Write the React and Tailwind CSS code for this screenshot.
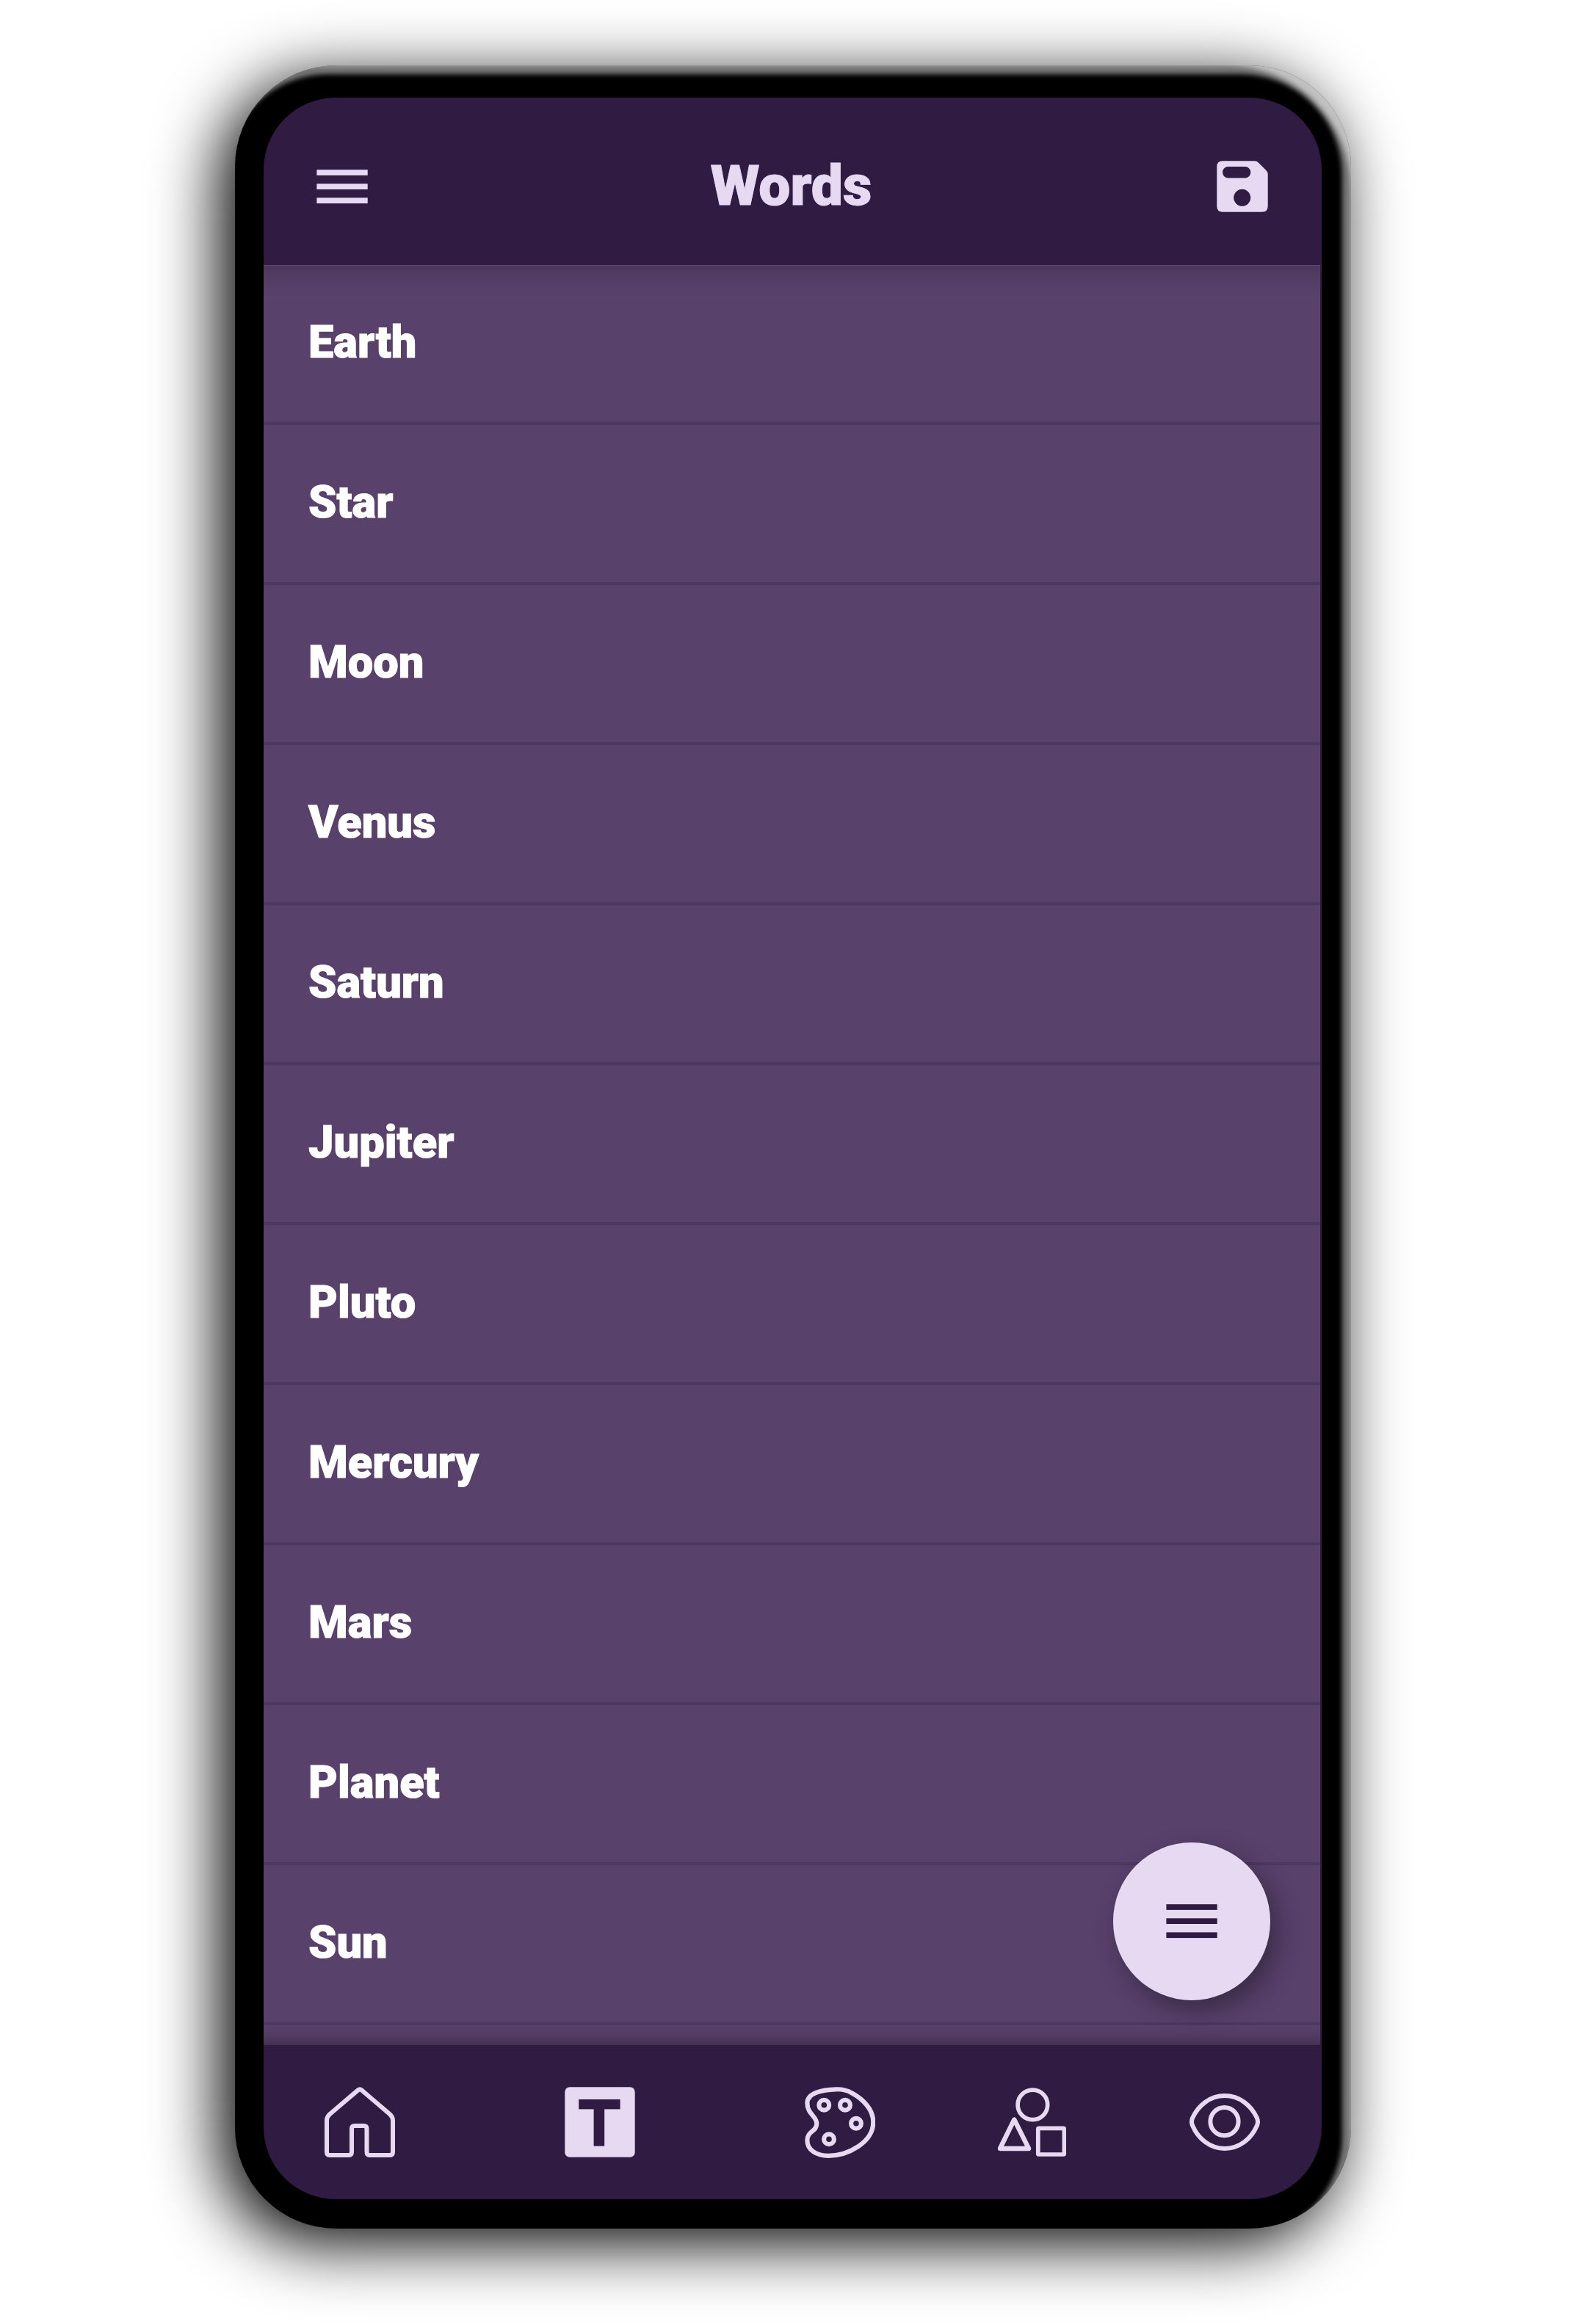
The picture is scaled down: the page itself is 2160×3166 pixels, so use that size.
const WORDS = ["Earth", "Star", "Moon", "Venus", "Saturn", "Jupiter", "Pluto", "Mercury", "Mars", "Planet", "Sun"];

function MenuIcon({ className }) {
  return (
    <svg className={className} viewBox="0 0 70 47" fill="currentColor">
      <rect x="0.4" y="0.2" width="69.3" height="7.7" />
      <rect x="0.4" y="19.3" width="69.3" height="7.7" />
      <rect x="0.4" y="38.4" width="69.3" height="7.7" />
    </svg>
  );
}

function SaveIcon() {
  return (
    <svg className="h-[70px] w-[70px]" viewBox="0 0 70 70">
      <path
        fill="currentColor"
        fillRule="evenodd"
        d="M8 0.3H51.5Q54.6 0.3 56.8 2.4L67.5 13.2Q69.7 15.4 69.7 18.4V62Q69.7 69.7 62 69.7H8Q0.3 69.7 0.3 62V8Q0.3 0.3 8 0.3ZM15.7 8A7.7 7.7 0 0 0 15.7 23.4H38.6A7.7 7.7 0 0 0 38.6 8ZM34.7 38.8A11.5 11.5 0 1 0 34.7 61.8A11.5 11.5 0 1 0 34.7 38.8Z"
      />
    </svg>
  );
}

function HomeIcon() {
  return (
    <svg className="h-24 w-24" viewBox="0 0 96 96" fill="none" stroke="currentColor" strokeWidth="6" strokeLinejoin="round">
      <path d="M3 88.5V46Q3 41 7 37.3L45.3 4.6Q48 2.2 50.7 4.6L89 37.3Q93 41 93 46V88.5Q93 93 89 93H61.5Q57.5 93 57.5 88.5V57Q57.5 53 53.5 53H41Q37 53 37 57V88.5Q37 93 33 93H7Q3 93 3 88.5Z" />
    </svg>
  );
}

function TextIcon() {
  return (
    <svg className="h-24 w-24" viewBox="0 0 96 96">
      <rect x="0.3" y="0.3" width="95.4" height="95.4" rx="6.5" fill="currentColor" />
      <rect x="19.2" y="17" width="56.4" height="13.4" fill="#301b43" />
      <rect x="39.6" y="17" width="14.6" height="63.6" fill="#301b43" />
    </svg>
  );
}

function PaletteIcon() {
  return (
    <svg className="h-[97px] w-24" viewBox="0 0 96 97" fill="none" stroke="currentColor" strokeWidth="6.2">
      <path d="M42.3 3.3C50 3 58 4.6 64 8.3C80 17 93.3 31 93.3 48C93.3 76 58 93.8 32.3 93.8C16 93.8 3.4 86 3.4 73C3.4 59.5 16.3 61.5 16.3 50C16.3 40 3.4 37 3.4 22C3.4 8 24 3.8 42.3 3.3Z" />
      <circle cx="26.3" cy="24.7" r="6.9" />
      <circle cx="55" cy="24.7" r="6.9" />
      <circle cx="70" cy="49.7" r="6.9" />
      <circle cx="33" cy="71.3" r="6.9" />
    </svg>
  );
}

function ShapesIcon() {
  return (
    <svg className="h-[95px] w-[93px]" viewBox="0 0 93 95" fill="none" stroke="currentColor" strokeWidth="5.7" strokeLinejoin="round">
      <circle cx="47.4" cy="23.4" r="20.3" />
      <path d="M22.3 43.5L2.9 83H42.1Z" strokeWidth="6.3" />
      <rect x="54.8" y="55.4" width="35.6" height="35.6" rx="1" />
    </svg>
  );
}

function EyeIcon() {
  return (
    <svg className="h-[78px] w-24" viewBox="0 0 96 78" fill="none" stroke="currentColor" strokeWidth="6">
      <path d="M4 33.5C12 16 28 3.1 48 3.1C68 3.1 84 16 92 33.5Q94 38.5 92 43.5C84 62 68 74.9 48 74.9C28 74.9 12 62 4 43.5Q2 38.5 4 33.5Z" />
      <circle cx="47.5" cy="38.2" r="19.1" />
    </svg>
  );
}

export default function App() {
  return (
    <div className="h-[3166px] w-[2160px] overflow-hidden bg-white pt-[89px] pl-[320px] font-['Roboto',sans-serif]">
      <div className="h-[2947px] w-[1520px] rounded-[138px] bg-black pt-[44px] pl-[39px] shadow-[-20px_20px_90px_#000,inset_-12px_12px_6px_rgba(255,255,255,0.46),inset_-30px_30px_6px_-30px_rgba(255,255,255,0.55)]">
        <div className="relative flex h-[2863px] w-[1441px] flex-col overflow-hidden rounded-[98px] bg-[#301b43] text-[#e7d9f2]">
          <header className="flex h-[228px] shrink-0 items-center justify-between pt-[14px] pr-[73px] pl-[72px]">
            <MenuIcon className="h-[47px] w-[70px]" />
            <h1 className="mr-[3px] pb-[2px] text-[76.8px] leading-none font-black [-webkit-text-stroke:1px_#e7d9f2]">Words</h1>
            <SaveIcon />
          </header>

          <main className="mr-[2px] h-[2425px] shrink-0 overflow-hidden border-t border-[#5f4771] bg-[#58416b] bg-[linear-gradient(to_bottom,rgba(0,0,0,0.15),rgba(0,0,0,0.08)_14px,rgba(0,0,0,0.025)_28px,transparent_46px,transparent_2399px,rgba(0,0,0,0.07)_2410px,rgba(0,0,0,0.23)_2424px)]">
            <ul className="-mt-px">
              {WORDS.map((word) => (
                <li
                  key={word}
                  className="flex h-[218px] items-center border-b-[4px] border-[#4f3762] pb-[2px] pl-[61px] text-[61.4px] leading-none font-black text-white [-webkit-text-stroke:1px_#fff]"
                >
                  {word}
                </li>
              ))}
            </ul>
          </main>

          <nav className="flex h-[210px] shrink-0 items-center pl-[83px]">
            <HomeIcon />
            <div className="ml-[231px]"><TextIcon /></div>
            <div className="ml-[231px]"><PaletteIcon /></div>
            <div className="ml-[167px]"><ShapesIcon /></div>
            <div className="ml-[168px]"><EyeIcon /></div>
          </nav>

          <button className="absolute right-[70px] bottom-[271px] flex h-[215px] w-[214px] items-center justify-center rounded-full bg-[#e7d9f2] text-[#301b43] shadow-[10px_14px_34px_rgba(0,0,0,0.35)]">
            <MenuIcon className="h-[47px] w-[70px]" />
          </button>
        </div>
      </div>
    </div>
  );
}
